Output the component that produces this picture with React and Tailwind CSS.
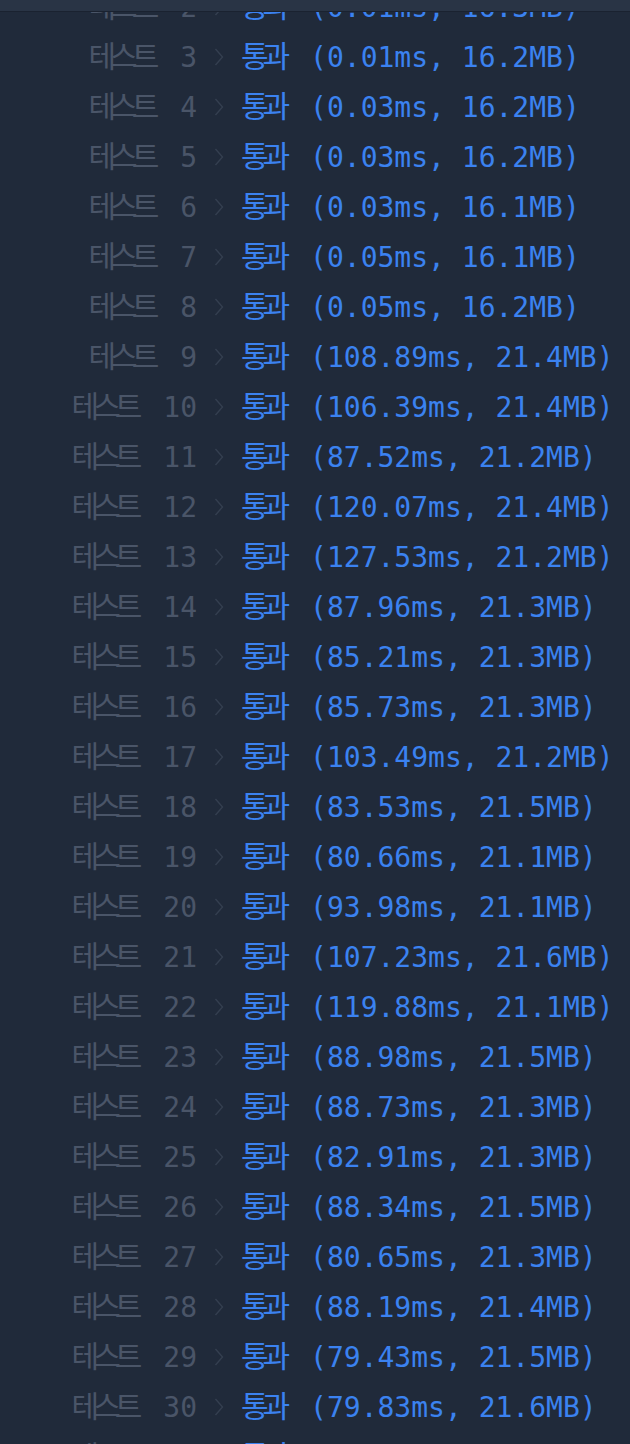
import React from 'react';

const results = [
  [2, '0.01ms', '16.3MB'],
  [3, '0.01ms', '16.2MB'],
  [4, '0.03ms', '16.2MB'],
  [5, '0.03ms', '16.2MB'],
  [6, '0.03ms', '16.1MB'],
  [7, '0.05ms', '16.1MB'],
  [8, '0.05ms', '16.2MB'],
  [9, '108.89ms', '21.4MB'],
  [10, '106.39ms', '21.4MB'],
  [11, '87.52ms', '21.2MB'],
  [12, '120.07ms', '21.4MB'],
  [13, '127.53ms', '21.2MB'],
  [14, '87.96ms', '21.3MB'],
  [15, '85.21ms', '21.3MB'],
  [16, '85.73ms', '21.3MB'],
  [17, '103.49ms', '21.2MB'],
  [18, '83.53ms', '21.5MB'],
  [19, '80.66ms', '21.1MB'],
  [20, '93.98ms', '21.1MB'],
  [21, '107.23ms', '21.6MB'],
  [22, '119.88ms', '21.1MB'],
  [23, '88.98ms', '21.5MB'],
  [24, '88.73ms', '21.3MB'],
  [25, '82.91ms', '21.3MB'],
  [26, '88.34ms', '21.5MB'],
  [27, '80.65ms', '21.3MB'],
  [28, '88.19ms', '21.4MB'],
  [29, '79.43ms', '21.5MB'],
  [30, '79.83ms', '21.6MB'],
  [31, '81.20ms', '21.4MB'],
];

const Chevron = () => (
  <svg width="10" height="18" viewBox="0 0 10 18" fill="none" className="shrink-0">
    <polyline points="1.5,1 8.5,9 1.5,17" stroke="#343f50" strokeWidth="1.4" />
  </svg>
);

const Row = ({ no, time, mem }) => (
  <div className="flex items-center h-[50px] whitespace-pre">
    <div className="w-[197px] text-right text-[#4a5568]">
      <span className="text-[30px] tracking-[-6px] mr-[10px]">테스트</span>
      {' ' + no}
    </div>
    <div className="ml-[17px] w-[10px] flex items-center">
      <Chevron />
    </div>
    <div className="ml-[17px] text-[#3b82f0]">
      <span className="text-[30px] tracking-[-6px] mr-[9px]">통과</span>
      {' (' + time + ', ' + mem + ')'}
    </div>
  </div>
);

export default function App() {
  return (
    <div
      className="relative h-[1444px] overflow-hidden bg-[#202a3a] text-[28px] leading-none"
      style={{ fontFamily: '"DejaVu Sans Mono", "Noto Sans CJK KR", monospace' }}
    >
      <div className="absolute top-0 inset-x-0 z-10 h-[12px] bg-[#293445] border-b border-[#1a2230]" />
      <div className="-mt-[18px]">
        {results.map(([no, time, mem]) => (
          <Row key={no} no={no} time={time} mem={mem} />
        ))}
      </div>
    </div>
  );
}
